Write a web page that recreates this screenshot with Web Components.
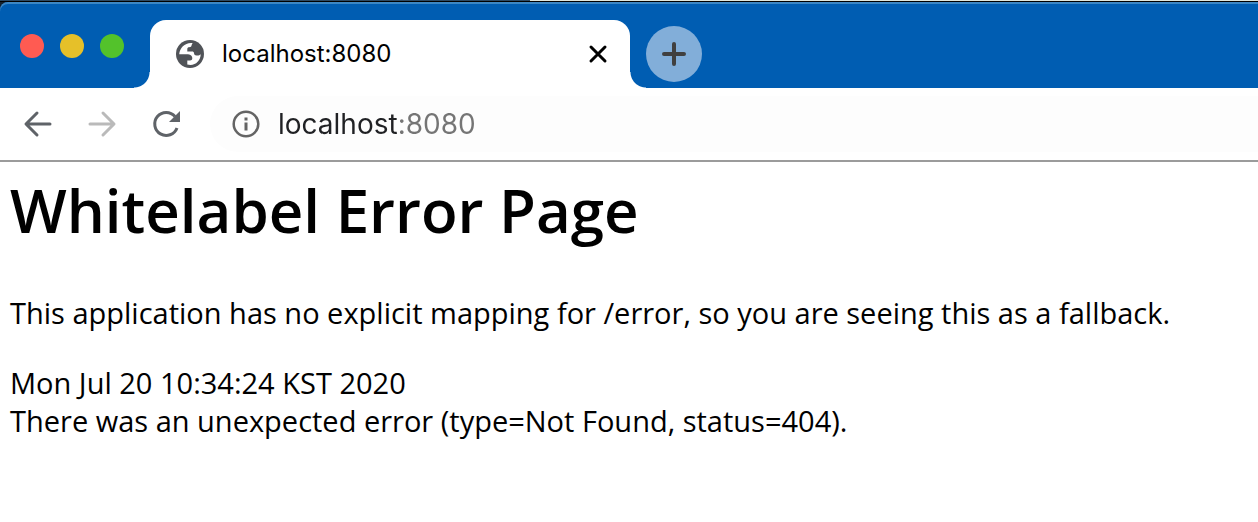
<!DOCTYPE html>
<html lang="en">
<head>
<meta charset="utf-8">
<title>localhost:8080</title>
<style>
body{
    margin: 0;
    background: #fff;
}
</style>
</head>
<body>
<browser-window>
    <tab-strip slot="tabs">
        <browser-tab>localhost:8080</browser-tab>
    </tab-strip>
    <tool-bar slot="toolbar" data-url="localhost:8080"></tool-bar>
    <error-page>
        <span slot="title">Whitelabel Error Page</span>
        <p>This application has no explicit mapping for /error, so you are seeing this as a fallback.</p>
        <div>Mon Jul 20 10:34:24 KST 2020</div>
        <div>There was an unexpected error (type=Not Found, status=404).</div>
    </error-page>
</browser-window>

<script>
function define(name, html, setup){
    let template = document.createElement('template');
    template.innerHTML = html;

    window.customElements.define(name, class extends HTMLElement{
        constructor(){
            super();
            this.attachShadow({ mode:'open'});
            this.shadowRoot.appendChild(template.content.cloneNode(true));
            if(setup) setup(this);
        }
    });
}

define('browser-window', `
<style>
:host{
    display: flex;
    flex-direction: column;
}
/* what shows of the windows behind */
.behind{
    height: 1px;
    border-bottom: 1px solid #000;
    background: linear-gradient(90deg, #2c4963 530px, #dfe6dc 530px);
}
.top{
    background: #14212d;
}
</style>
<div class="behind"></div>
<div class="top"><slot name="tabs"></slot></div>
<slot name="toolbar"></slot>
<main><slot></slot></main>
`);

define('window-controls', `
<style>
:host{
    display: flex;
    gap: 16px;
    padding: 32px 26px 0 20px;
}
button{
    width: 24px;
    height: 24px;
    padding: 0;
    border: none;
    border-radius: 50%;
}
.close{ background: #ff5b52; }
.minimize{ background: #e6c029; }
.zoom{ background: #53c22b; }
</style>
<button class="close" aria-label="Close window"></button>
<button class="minimize" aria-label="Minimize window"></button>
<button class="zoom" aria-label="Zoom window"></button>
`);

define('tab-strip', `
<style>
:host{
    display: flex;
    align-items: flex-start;
    border-radius: 8px 0 0 0;
    background: #005db2;
    box-shadow: inset 0 2px #3c87c5;
}
.tabs{
    display: flex;
    padding-top: 18px;
}
.new{
    display: flex;
    align-items: center;
    justify-content: center;
    width: 56px;
    height: 56px;
    margin: 24px 16px 0;
    padding: 0;
    border: none;
    border-radius: 50%;
    background: #82aed9;
}
</style>
<window-controls></window-controls>
<div class="tabs"><slot></slot></div>
<button class="new" aria-label="New tab">
    <svg width="24" height="24" fill="none" stroke="#404040" stroke-width="4" stroke-linecap="round"><path d="M12 2v20M2 12h20"/></svg>
</button>
`);

define('browser-tab', `
<style>
:host{
    display: flex;
    align-items: center;
    box-sizing: border-box;
    position: relative;
    width: 480px;
    height: 68px;
    padding: 0 20px 0 26px;
    border-radius: 16px 16px 0 0;
    background: #fff;
    color: #000;
    font: 24px/32px Inter, "Liberation Sans", sans-serif;
}
/* feet that curve out into the toolbar */
:host::before, :host::after{
    content: "";
    position: absolute;
    bottom: 0;
    width: 16px;
    height: 16px;
}
:host::before{
    right: 100%;
    background: radial-gradient(circle at 0 0, transparent 15px, #fff 16px);
}
:host::after{
    left: 100%;
    background: radial-gradient(circle at 100% 0, transparent 15px, #fff 16px);
}
.title{
    flex: 1;
    padding-left: 18px;
}
button{
    display: flex;
    padding: 0;
    border: none;
    background: none;
}
</style>
<svg width="28" height="28" viewBox="0 0 28 28">
    <circle cx="14" cy="14" r="14" fill="#505358"/>
    <path fill="#fff" d="M16.600 3C9.500 2 3.700 7.500 3.200 14.200H11C14 14.200 16.300 15.500 16.300 18.300C16.300 19.800 15.300 20.500 14 20.500H11.300V24.500C18.500 26.500 24.500 21.500 24.700 14.300C23.500 15.500 22 15.800 20.500 15.500C18.800 15.300 18 14.500 18 13C17.800 12 17.200 11.500 16.300 11.500H11.300V9C11.300 7.800 12 7.300 13 7.300C14.800 7.200 15.600 6.500 15.600 5Z"/>
</svg>
<span class="title"><slot></slot></span>
<button aria-label="Close tab">
    <svg width="24" height="24" fill="none" stroke="#000" stroke-width="3" stroke-linecap="round"><path d="M5 5l14 14M19 5l-14 14"/></svg>
</button>
`);

define('tool-bar', `
<style>
:host{
    display: flex;
    align-items: center;
    padding: 8px 0;
    border-bottom: 2px solid #9b9b9b;
    background: #fff;
}
nav{
    display: flex;
    gap: 32px;
    padding: 0 28px 0 22px;
}
button{
    display: flex;
    padding: 0;
    border: none;
    background: none;
}
.address{
    display: flex;
    flex: 1;
    align-items: center;
    gap: 16px;
    height: 56px;
    padding-left: 20px;
    border-radius: 28px 0 0 28px;
    background: #fdfdfd;
}
input{
    flex: 1;
    min-width: 0;
    height: 40px;
    padding: 0;
    border: none;
    outline: none;
    font: 28px/40px Inter, "Liberation Sans", sans-serif;
    color: transparent;
    /* host name dark, port grey */
    background: linear-gradient(90deg, #202124 120px, #757575 120px);
    background-clip: text;
    -webkit-background-clip: text;
}
</style>
<nav>
    <button aria-label="Back">
        <svg width="32" height="32" fill="none" stroke="#5f6368" stroke-width="3" stroke-linecap="round" stroke-linejoin="round"><path d="M28 16H5M15 5L4 16l11 11"/></svg>
    </button>
    <button aria-label="Forward" disabled>
        <svg width="32" height="32" fill="none" stroke="#bababa" stroke-width="3" stroke-linecap="round" stroke-linejoin="round"><path d="M4 16h23M17 5l11 11-11 11"/></svg>
    </button>
    <button aria-label="Reload">
        <svg width="32" height="32"><path d="M27 20A11.500 11.500 0 1 1 25 8.500" fill="none" stroke="#5f6368" stroke-width="3"/><path d="M30 3v11H19z" fill="#5f6368"/></svg>
    </button>
</nav>
<div class="address">
    <button aria-label="View site information">
        <svg width="32" height="32" fill="none" stroke="#646464" stroke-width="2.500"><circle cx="16" cy="16" r="12.300"/><path d="M16 14.500v8M16 9.500v3" stroke-width="3"/></svg>
    </button>
    <input type="text" aria-label="Address" spellcheck="false">
</div>
`, host => {
    host.shadowRoot.querySelector('input').value = host.getAttribute('data-url');
});

define('error-page', `
<style>
:host{
    display: block;
    padding: 6px 10px;
    color: #000;
    font: 29px/38px "Open Sans", "Noto Sans", sans-serif;
}
h1{
    margin: 0 0 42px;
    font-size: 60px;
    line-height: 84px;
    font-weight: 600;
}
::slotted(p){
    margin: 0 0 32px !important;
}
</style>
<h1><slot name="title"></slot></h1>
<slot></slot>
`);
</script>
</body>
</html>
